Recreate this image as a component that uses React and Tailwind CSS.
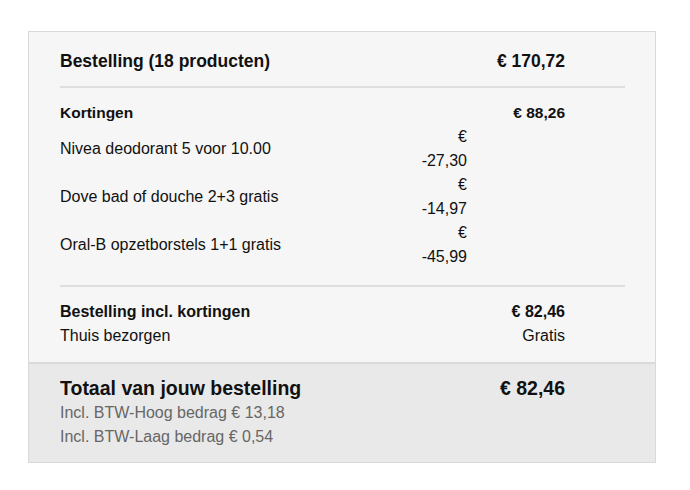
export default function App() {
  const items = [
    ["Nivea deodorant 5 voor 10.00", "-27,30"],
    ["Dove bad of douche 2+3 gratis", "-14,97"],
    ["Oral-B opzetborstels 1+1 gratis", "-45,99"],
  ];
  return (
    <div className="w-[690px] h-[490px] bg-white pt-[31px] pl-[28px]" style={{ fontFamily: '"Liberation Sans", Arial, sans-serif' }}>
      <div className="w-[628px] border border-[#d9d9d9] bg-[#f6f6f6] text-[#111]">
        <div className="pl-[31px] pr-[30px]">
          <div className="flex pt-[17px] pb-[13px] pr-[60px] text-[17.5px] font-bold leading-[24px]">
            <div className="flex-1">Bestelling (18 producten)</div>
            <div>€ 170,72</div>
          </div>
          <div className="h-[2px] bg-[#dedede]" />
          <div className="pt-[13px] pb-[16px] pr-[60px] text-[16px] leading-[24px]">
            <div className="flex font-bold text-[15.5px]">
              <div className="flex-1">Kortingen</div>
              <div>€ 88,26</div>
            </div>
            {items.map(([label, val]) => (
              <div key={label} className="flex h-[48px] items-center">
                <div className="flex-1">{label}</div>
                <div className="w-[60px] text-right">
                  <div>€</div>
                  <div>{val}</div>
                </div>
                <div className="w-[98px]" />
              </div>
            ))}
          </div>
          <div className="h-[2px] bg-[#dedede]" />
          <div className="pt-[13px] pb-[14px] pr-[60px] text-[16px] leading-[24px]">
            <div className="flex font-bold">
              <div className="flex-1">Bestelling incl. kortingen</div>
              <div>€ 82,46</div>
            </div>
            <div className="flex">
              <div className="flex-1">Thuis bezorgen</div>
              <div>Gratis</div>
            </div>
          </div>
        </div>
        <div className="border-t-2 border-[#dadada] bg-[#e9e9e9] pl-[31px] pr-[90px] pt-[11px] pb-[14px]">
          <div className="flex text-[19.5px] font-bold leading-[26px]">
            <div className="flex-1">Totaal van jouw bestelling</div>
            <div>€ 82,46</div>
          </div>
          <div className="text-[16px] leading-[24px] text-[#666]">Incl. BTW-Hoog bedrag € 13,18</div>
          <div className="text-[16px] leading-[23px] text-[#666]">Incl. BTW-Laag bedrag € 0,54</div>
        </div>
      </div>
    </div>
  );
}
